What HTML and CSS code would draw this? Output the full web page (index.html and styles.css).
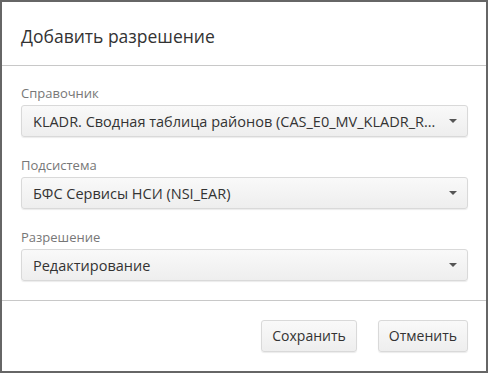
FILE: index.html
```html
<!DOCTYPE html>
<html lang="ru">
<head>
  <meta charset="UTF-8" />
  <title>Добавить разрешение</title>
  <link rel="stylesheet" href="styles.css">
</head>
<body>
  <div class="dialog">
    <div class="dialog-header">
      <h1 class="dialog-title">Добавить разрешение</h1>
    </div>

    <div class="dialog-body">
      <div class="field">
        <label class="field-label">Справочник</label>
        <div class="select">
          <span class="select-value">KLADR. Сводная таблица районов (CAS_E0_MV_KLADR_RAYON)</span>
          <span class="select-arrow"></span>
        </div>
      </div>

      <div class="field">
        <label class="field-label">Подсистема</label>
        <div class="select">
          <span class="select-value">БФС Сервисы НСИ (NSI_EAR)</span>
          <span class="select-arrow"></span>
        </div>
      </div>

      <div class="field">
        <label class="field-label">Разрешение</label>
        <div class="select">
          <span class="select-value">Редактирование</span>
          <span class="select-arrow"></span>
        </div>
      </div>
    </div>

    <div class="dialog-footer">
      <button class="btn">Сохранить</button>
      <button class="btn">Отменить</button>
    </div>
  </div>
</body>
</html>
```

FILE: styles.css
```css
* {
  margin: 0;
  padding: 0;
  box-sizing: border-box;
}

html, body {
  width: 100%;
  height: 100%;
  overflow: hidden;
  background: #fff;
  font-family: "Open Sans", "Noto Sans", sans-serif;
  color: #333;
}

.dialog {
  width: 488px;
  height: 373px;
  border: 2px solid #666;
  background: #fff;
  display: flex;
  flex-direction: column;
}

.dialog-header {
  height: 64px;
  padding: 0 18px 0 19px;
  display: flex;
  align-items: center;
  border-bottom: 1px solid #c8c8c8;
}

.dialog-title {
  font-size: 17.5px;
  font-weight: normal;
  color: #333;
  padding-top: 5px;
}

.dialog-body {
  padding: 18px 18px 19px 19px;
  display: flex;
  flex-direction: column;
  gap: 19px;
  border-bottom: 1px solid #c8c8c8;
}

.field {
  display: flex;
  flex-direction: column;
  gap: 3px;
}

.field-label {
  font-size: 13px;
  line-height: 18px;
  color: #777;
}

.select {
  height: 32px;
  border: 1px solid #d9d9d9;
  border-radius: 3px;
  background: linear-gradient(#f9f9f9, #eeeeee);
  box-shadow: 0 1px 1px rgba(0, 0, 0, 0.08);
  display: flex;
  align-items: center;
  padding: 0 10px 0 11px;
  gap: 9px;
}

.select-value {
  flex: 1;
  font-size: 14.5px;
  color: #333;
  white-space: nowrap;
  overflow: hidden;
  text-overflow: ellipsis;
}

.select-arrow {
  width: 0;
  height: 0;
  border-left: 4.5px solid transparent;
  border-right: 4.5px solid transparent;
  border-top: 4px solid #555;
}

.dialog-footer {
  flex: 1;
  display: flex;
  justify-content: flex-end;
  align-items: center;
  gap: 21px;
  padding: 0 18px 1px 19px;
}

.btn {
  height: 32px;
  padding: 0 10px;
  font-family: inherit;
  font-size: 14px;
  color: #333;
  border: 1px solid #d9d9d9;
  border-radius: 3px;
  background: linear-gradient(#f9f9f9, #eeeeee);
  box-shadow: 0 1px 1px rgba(0, 0, 0, 0.08);
}
```
